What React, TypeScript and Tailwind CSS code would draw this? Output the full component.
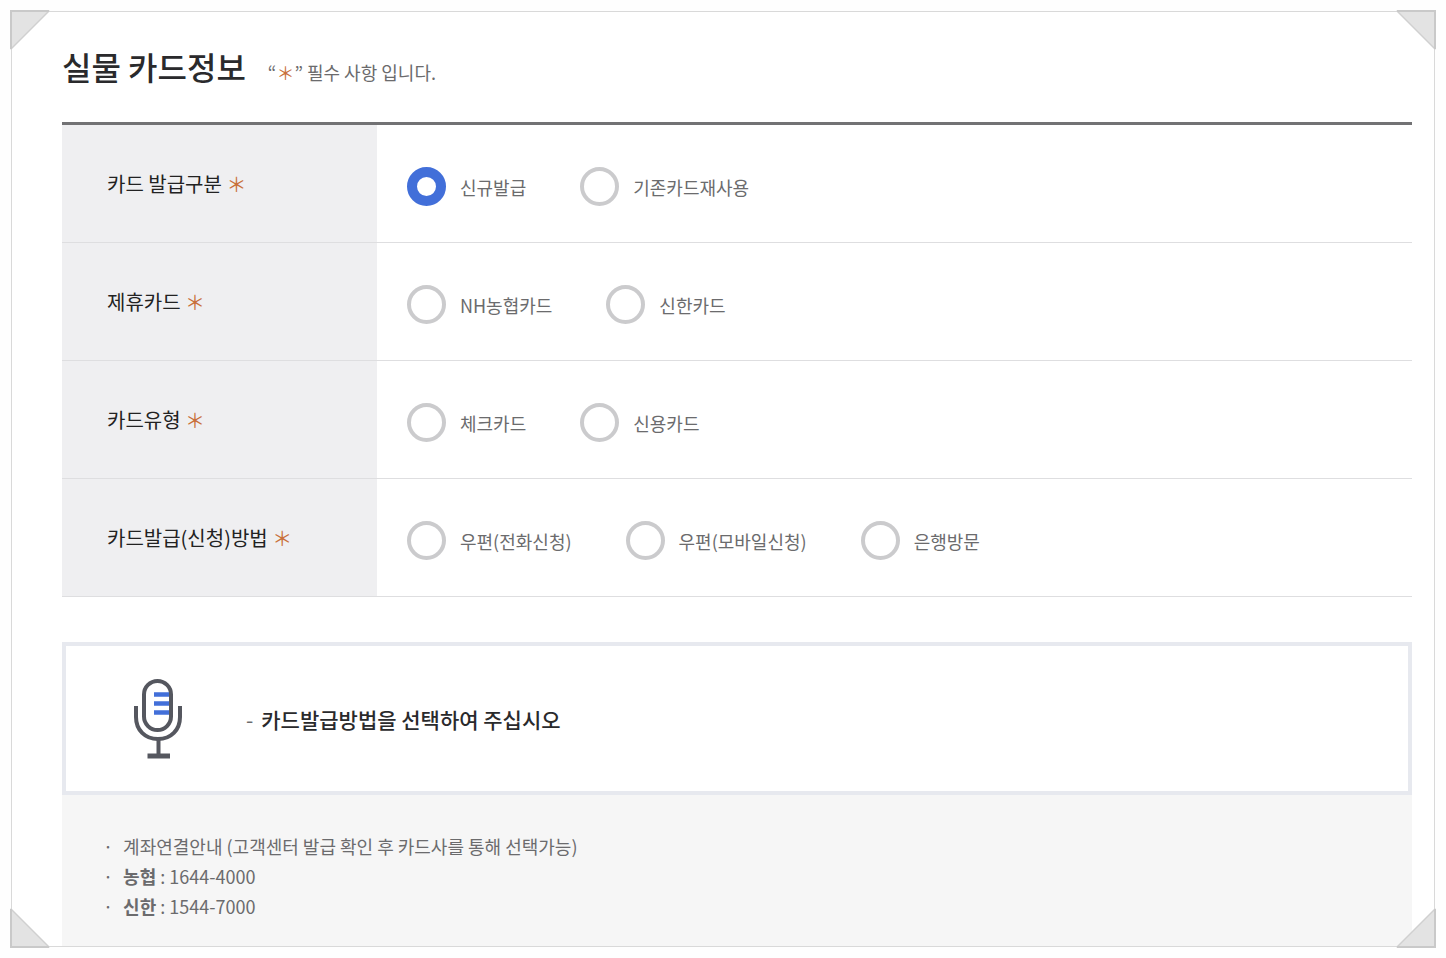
import React, { useState } from 'react';

interface CardField {
   name: string;
   label: string;
   options: string[];
   initial?: string;
}

const CARD_FIELDS: CardField[] = [
   { name: 'issueType', label: '카드 발급구분', options: ['신규발급', '기존카드재사용'], initial: '신규발급' },
   { name: 'partner', label: '제휴카드', options: ['NH농협카드', '신한카드'] },
   { name: 'cardType', label: '카드유형', options: ['체크카드', '신용카드'] },
   { name: 'issueMethod', label: '카드발급(신청)방법', options: ['우편(전화신청)', '우편(모바일신청)', '은행방문'] },
];

const CONTACTS = [
   { bank: '농협', phone: '1644-4000' },
   { bank: '신한', phone: '1544-7000' },
];

const Required: React.FC = () => <span className="text-[#c9703a]">＊</span>;

/* Folded photo corner, drawn for the top left and rotated for the others */
const Corner: React.FC<{ className: string }> = ({ className }) => (
   <svg className={`absolute size-10 ${className}`} viewBox="0 0 40 40" aria-hidden="true">
      <path d="M0 0H40L0 40Z" fill="#e3e3e3" />
      <path d="M39 1L1 39" stroke="#d0d0d0" strokeWidth="1.5" fill="none" />
      <path d="M1 39V1H39" stroke="#c9c9c9" strokeWidth="2" fill="none" />
   </svg>
);

const MicIcon: React.FC = () => (
   <svg className="w-12 h-20 shrink-0" viewBox="0 0 48 80" fill="none" aria-hidden="true">
      <g stroke="#55575f" strokeWidth="4">
         <rect x="10" y="2" width="27" height="49" rx="13.5" />
         <path d="M2 27V38C2 51 11 60 24 60S46 51 46 38V27" />
         <path d="M24.500 60V77" />
         <path d="M13.500 77H36" strokeWidth="5" />
      </g>
      <path d="M20 15.500H35M20 24.500H35M20 33.500H35" stroke="#426fd9" strokeWidth="4.500" />
   </svg>
);

const FieldRow: React.FC<{ field: CardField }> = ({ field }) => {
   const [selected, setSelected] = useState(field.initial ?? '');

   return (
      <tr>
         <th
            scope="row"
            id={`${field.name}-label`}
            className="h-[118px] w-[315px] border-b border-[#dedee0] bg-[#efeff1] pl-[45px] text-left text-xl font-normal text-[#222]"
         >
            {field.label} <Required />
         </th>
         <td className="border-b border-[#dedee0] pl-[30px] pt-[6px]">
            <div role="radiogroup" aria-labelledby={`${field.name}-label`} className="flex flex-wrap gap-x-[54px] gap-y-3">
               {field.options.map((option) => (
                  <label key={option} className="flex items-center gap-[14px] text-lg text-[#6b6b6d] cursor-pointer">
                     <input
                        type="radio"
                        name={field.name}
                        value={option}
                        checked={selected === option}
                        onChange={() => setSelected(option)}
                        className="size-[39px] shrink-0 appearance-none rounded-full border-4 border-[#cbcbcd] bg-white checked:border-10 checked:border-[#426fd9] cursor-pointer"
                     />
                     <span>{option}</span>
                  </label>
               ))}
            </div>
         </td>
      </tr>
   );
};

export default function App() {
   return (
      <div className="bg-[#fefefe] p-[11px] font-['Noto_Sans_CJK_KR',sans-serif]">
         <main className="relative border border-[#d9d9d9] bg-white pl-[50px] pr-[22px]">

            <header className="flex items-baseline gap-[22px] pt-[30px] pb-8">
               <h1 className="text-[32px] leading-12 font-medium text-[#2a2a2c]">실물 카드정보</h1>
               <p className="text-lg text-[#6b6b6d]">
                  “<Required />” 필수 사항 입니다.
               </p>
            </header>

            <table className="w-full border-separate border-spacing-0 border-t-3 border-[#727274]">
               <tbody>
                  {CARD_FIELDS.map((field) => (
                     <FieldRow key={field.name} field={field} />
                  ))}
               </tbody>
            </table>

            <section className="mt-[45px] flex items-center gap-16 border-4 border-[#e7e9ef] px-[68px] pt-[33px] pb-8">
               <MicIcon />
               <p className="flex gap-2 text-[21px] leading-20 font-medium text-[#2a2a2c]">
                  <span className="font-normal text-[#6b6b6d]">-</span>
                  <span>카드발급방법을 선택하여 주십시오</span>
               </p>
            </section>

            <ul className="bg-[#f6f6f6] pl-[41px] pr-[45px] pt-9 pb-[25px] text-lg leading-[30px] text-[#6b6b6d]">
               <li className="flex gap-[10px]">
                  <span>·</span>
                  <span>계좌연결안내 (고객센터 발급 확인 후 카드사를 통해 선택가능)</span>
               </li>
               {CONTACTS.map((contact) => (
                  <li key={contact.bank} className="flex gap-[10px]">
                     <span>·</span>
                     <span><strong className="font-bold">{contact.bank}</strong> : {contact.phone}</span>
                  </li>
               ))}
            </ul>

            <Corner className="-top-0.5 -left-0.5" />
            <Corner className="-top-0.5 -right-0.5 rotate-90" />
            <Corner className="-bottom-0.5 -right-0.5 rotate-180" />
            <Corner className="-bottom-0.5 -left-0.5 -rotate-90" />
         </main>
      </div>
   );
}
